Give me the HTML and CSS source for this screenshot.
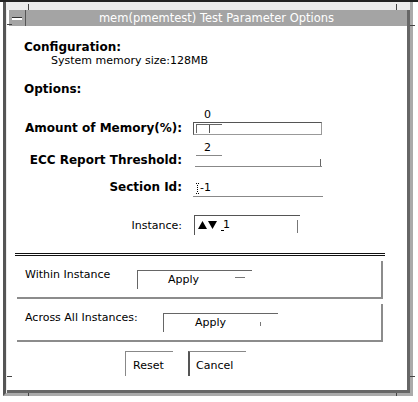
FILE: index.html
```html
<!DOCTYPE html>
<html lang="en">
<head>
  <meta charset="UTF-8" />
  <title>mem(pmemtest) Test Parameter Options</title>
  <link rel="stylesheet" href="styles.css">
</head>
<body>

  <div class="window">
    <!-- resize corner marks -->
    <span class="tick tick-v" style="left:22px; top:2px"></span>
    <span class="tick tick-v" style="left:390px; top:2px"></span>
    <span class="tick tick-v" style="left:22px; top:391px"></span>
    <span class="tick tick-v" style="left:390px; top:391px"></span>
    <span class="tick tick-h" style="left:1px; top:22px"></span>
    <span class="tick tick-h" style="left:404px; top:23px"></span>
    <span class="tick tick-h" style="left:1px; top:374px"></span>
    <span class="tick tick-h" style="left:404px; top:374px"></span>

    <div class="pane">
      <div class="titlebar">
        <span class="menu-btn"><span class="menu-mark"></span></span>
        <span class="title">mem(pmemtest) Test Parameter Options</span>
      </div>

      <div class="content">
        <h2 class="heading">Configuration:</h2>
        <p class="info">System memory size:128MB</p>

        <h2 class="heading options">Options:</h2>

        <div class="row row-amount">
          <label class="label">Amount of Memory(%):</label>
          <div class="field">
            <span class="value">0</span>
            <div class="slider"><span class="thumb"><span class="thumb-line"></span></span></div>
          </div>
        </div>

        <div class="row row-ecc">
          <label class="label">ECC Report Threshold:</label>
          <div class="field">
            <span class="value value-ul">2</span>
            <div class="track"><span class="track-end"></span></div>
          </div>
        </div>

        <div class="row row-section">
          <label class="label">Section Id:</label>
          <div class="field text-field">
            <svg class="caret" width="4" height="11" viewBox="0 0 4 11">
              <rect x="0" y="0" width="1" height="1" fill="#000"/>
              <rect x="2" y="0" width="1" height="1" fill="#000"/>
              <rect x="1" y="2" width="1" height="1" fill="#000"/>
              <rect x="1" y="4" width="1" height="1" fill="#000"/>
              <rect x="1" y="6" width="1" height="1" fill="#000"/>
              <rect x="1" y="8" width="1" height="1" fill="#000"/>
              <rect x="0" y="10" width="1" height="1" fill="#000"/>
              <rect x="2" y="10" width="1" height="1" fill="#000"/>
            </svg>
            <span>-1</span>
          </div>
        </div>

        <div class="row row-instance">
          <label class="label plain">Instance:</label>
          <div class="spin-field">
            <svg class="spin" width="19" height="8" viewBox="0 0 19 8">
              <polygon points="0,8 4.5,0 9,8" fill="#000"/>
              <polygon points="10,0 19,0 14.5,8" fill="#000"/>
            </svg>
            <span class="spin-value">1</span>
            <span class="spin-end"></span>
          </div>
        </div>

        <div class="separator"></div>

        <div class="group">
          <span class="group-label">Within Instance</span>
          <button class="apply apply-within">Apply<span class="apply-dash"></span></button>
        </div>

        <div class="group">
          <span class="group-label wide">Across All Instances:</span>
          <button class="apply apply-across">Apply<span class="apply-tick"></span></button>
        </div>

        <div class="actions">
          <button class="btn btn-reset">Reset</button>
          <button class="btn btn-cancel">Cancel</button>
        </div>
      </div>
    </div>
  </div>

</body>
</html>
```

FILE: styles.css
```css
body {
  font-family: 'DejaVu Sans', sans-serif;
  font-size: 11px;
  color: #000;
  background-color: #fff;
  margin: 0;
  padding: 0;
  border-top: 2px solid #222;
}
.window {
  position: relative;
  box-sizing: border-box;
  width: 410px;
  height: 394px;
  margin-left: 3px;
  padding: 8px 0 0 1px;
  background-color: #ebebeb;
  border-left: 3px solid #555;
  border-right: 3px solid #aaa;
  border-bottom: 3px solid #aaa;
}
.tick {
  position: absolute;
  background-color: #444;
}
.tick-v { width: 1px; height: 6px; }
.tick-h { width: 5px; height: 1px; }

.pane {
  box-sizing: border-box;
  height: 383px;
  background-color: #fff;
  border-right: 3px solid #666;
  border-bottom: 3px solid #666;
}
.titlebar {
  display: flex;
  height: 16px;
  margin-left: 2px;
  background-color: #a4a4a4;
  color: #fff;
}
.menu-btn {
  display: flex;
  align-items: center;
  justify-content: center;
  width: 16px;
  border-right: 1px solid #555;
}
.menu-mark {
  width: 10px;
  height: 2px;
  background: #fff;
  border-top: 1px solid #333;
}
.title {
  flex: 1;
  text-align: center;
  line-height: 16px;
  font-size: 11.5px;
}

.content {
  padding: 14px 0 0 17px;
}
.heading {
  margin: 0;
  font-size: 12px;
  font-weight: bold;
  line-height: 14px;
}
.heading.options {
  margin-top: 14px;
}
.info {
  margin: 0 0 0 27px;
  line-height: 14px;
}

.row {
  display: flex;
  align-items: flex-end;
  margin-left: -10px;
}
.label {
  width: 168px;
  margin-right: 11px;
  text-align: right;
  font-size: 12px;
  font-weight: bold;
  line-height: 14px;
}
.label.plain {
  font-size: 11px;
  font-weight: normal;
}
.field {
  display: flex;
  flex-direction: column;
}
.value {
  display: block;
  line-height: 13px;
  padding-left: 11px;
}

.row-amount { margin-top: 12px; }
.slider {
  box-sizing: border-box;
  width: 129px;
  height: 13px;
  margin-top: 1px;
  padding: 1px 0 0 2px;
  border: 1px solid #555;
  border-right-color: #999;
  border-bottom-color: #999;
}
.thumb {
  display: flex;
  justify-content: center;
  box-sizing: border-box;
  width: 26px;
  height: 9px;
  border-top: 1px solid #666;
  border-left: 1px solid #666;
}
.thumb-line {
  width: 1px;
  background: #555;
}

.row-ecc { margin-top: 6px; }
.value-ul {
  width: 26px;
  margin-left: 3px;
  padding-left: 8px;
  line-height: 14px;
  border-bottom: 1px solid #888;
  box-sizing: border-box;
}
.track {
  display: flex;
  justify-content: flex-end;
  align-items: flex-end;
  box-sizing: border-box;
  width: 127px;
  height: 11px;
  margin-left: 2px;
  border-bottom: 1px solid #888;
}
.track-end {
  width: 1px;
  height: 7px;
  margin-right: 1px;
  background: #666;
}

.row-section { margin-top: 13px; }
.row-section .label { padding-bottom: 3px; }
.text-field {
  flex-direction: row;
  align-items: center;
  box-sizing: border-box;
  width: 130px;
  height: 15px;
  padding: 0 0 2px 3px;
  border-bottom: 1px solid #888;
  line-height: 12px;
}

.row-instance {
  align-items: flex-start;
  margin-top: 18px;
}
.row-instance .label { margin-top: 4px; }
.spin-field {
  display: flex;
  align-items: center;
  box-sizing: border-box;
  width: 106px;
  height: 20px;
  margin-left: 1px;
  padding: 0 1px 2px 3px;
  border-top: 1px solid #555;
  border-left: 1px solid #555;
}
.spin-value {
  margin-left: 4px;
  padding-left: 2px;
  line-height: 12px;
  background: linear-gradient(#000, #000) no-repeat left bottom / 3px 1px;
}
.spin-end {
  width: 1px;
  height: 13px;
  margin: 3px 1px 0 auto;
  background: #777;
}

.separator {
  width: 370px;
  height: 1px;
  margin: 18px 0 0 -9px;
  border-top: 1px solid #111;
  border-bottom: 1px solid #111;
}

.group {
  display: flex;
  align-items: flex-start;
  box-sizing: border-box;
  width: 366px;
  height: 38px;
  margin: 5px 0 0 -7px;
  padding: 7px 0 0 8px;
  border-right: 2px solid #8c8c8c;
  border-bottom: 2px solid #8c8c8c;
}
.group-label {
  width: 112px;
  line-height: 14px;
}
.group-label.wide { width: 138px; }

button {
  font-family: inherit;
  font-size: 11px;
  color: #000;
  background: #fff;
  border: none;
  margin: 0;
  cursor: pointer;
}
.apply {
  display: flex;
  align-items: flex-start;
  box-sizing: border-box;
  width: 115px;
  height: 19px;
  margin-top: 2px;
  padding: 2px 0 0 30px;
  line-height: 14px;
  border-top: 1px solid #666;
  border-left: 1px solid #666;
  text-align: left;
}
.apply-across { padding-left: 31px; }
.apply-dash {
  width: 10px;
  height: 1px;
  margin: 4px 7px 0 auto;
  background: #777;
}
.apply-tick {
  width: 1px;
  height: 4px;
  margin: 6px 17px 0 auto;
  background: #777;
}

.actions {
  display: flex;
  gap: 15px;
  margin: 9px 0 0 101px;
}
.btn {
  box-sizing: border-box;
  height: 25px;
  padding: 4px 0 0 7px;
  line-height: 14px;
  text-align: left;
  border-top: 1px solid #888;
  border-left: 1px solid #888;
}
.btn-reset { width: 48px; }
.btn-cancel {
  width: 58px;
  padding-left: 6px;
  border-left: 2px solid #555;
}
```
